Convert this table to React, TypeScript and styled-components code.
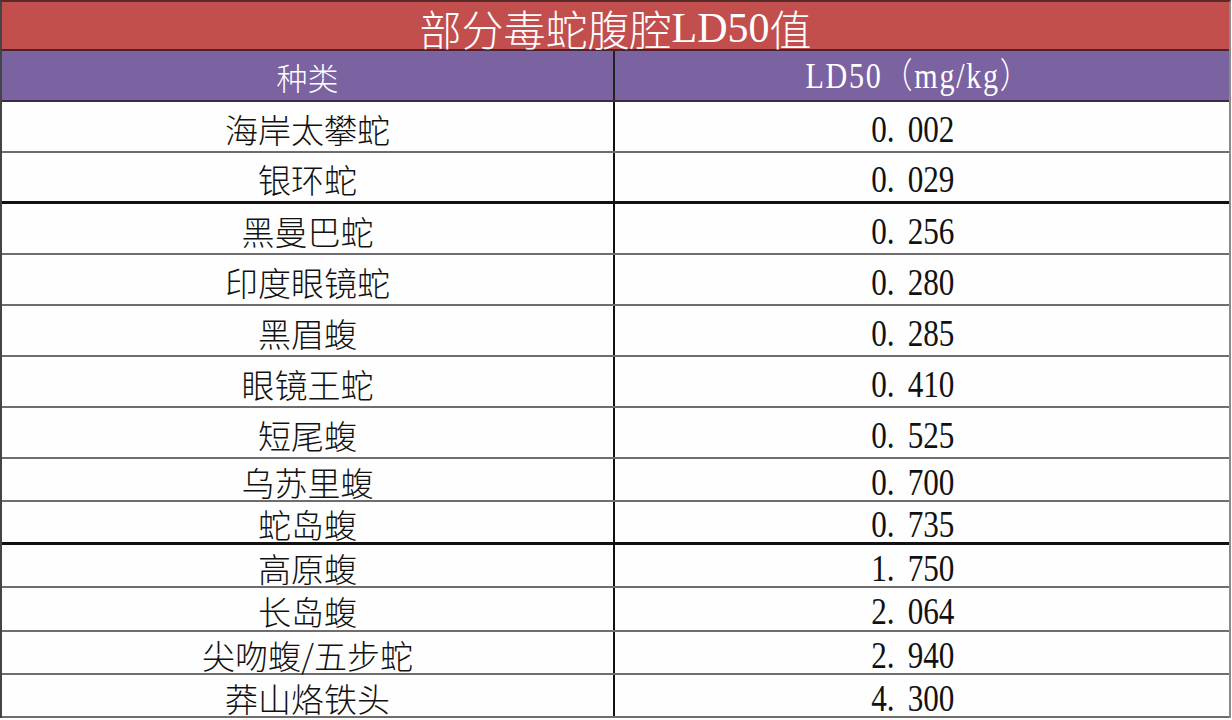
import React from "react";
import styled, { createGlobalStyle } from "styled-components";

const GlobalStyle = createGlobalStyle`
  html, body {
    margin: 0;
    padding: 0;
    background: #fdfdfd;
  }
  body {
    font-family: "Noto Sans CJK SC", "Liberation Sans", sans-serif;
  }
`;

type RowType = {
  h: number;
  line: "gray" | "black";
};

const rows: { name: string; value: string; h: number; line: "gray" | "black" }[] = [
  { name: "海岸太攀蛇", value: "0.002", h: 51, line: "gray" },
  { name: "银环蛇", value: "0.029", h: 51, line: "black" },
  { name: "黑曼巴蛇", value: "0.256", h: 51, line: "gray" },
  { name: "印度眼镜蛇", value: "0.280", h: 51, line: "gray" },
  { name: "黑眉蝮", value: "0.285", h: 51, line: "gray" },
  { name: "眼镜王蛇", value: "0.410", h: 51, line: "gray" },
  { name: "短尾蝮", value: "0.525", h: 51, line: "gray" },
  { name: "乌苏里蝮", value: "0.700", h: 43, line: "gray" },
  { name: "蛇岛蝮", value: "0.735", h: 43, line: "black" },
  { name: "高原蝮", value: "1.750", h: 43, line: "gray" },
  { name: "长岛蝮", value: "2.064", h: 44, line: "gray" },
  { name: "尖吻蝮/五步蛇", value: "2.940", h: 43, line: "gray" },
  { name: "莽山烙铁头", value: "4.300", h: 43, line: "gray" },
];

const Table = styled.div`
  width: 1231px;
  box-sizing: border-box;
  border-left: 2px solid #444;
  border-right: 2px solid #8a8a8a;
  border-top: 2px solid #5a2a2a;
  background: #fefefe;
`;

const TitleBar = styled.div`
  height: 49px;
  box-sizing: border-box;
  background: #c24e4d;
  border-bottom: 2px solid #4a2230;
  color: #fff;
  font-size: 42px;
  font-weight: 300;
  line-height: 40px;
  display: flex;
  align-items: center;
  justify-content: center;
  padding-top: 5px;
`;

const Latin = styled.span`
  font-family: "Liberation Serif", serif;
  font-weight: 400;
`;

const HeadRow = styled.div`
  display: grid;
  grid-template-columns: 613px 1fr;
  height: 51px;
  box-sizing: border-box;
  background: #7b62a0;
  border-bottom: 2px solid #3a2a48;
  color: #fff;
`;

const HeadCell = styled.div<{ first?: boolean }>`
  display: flex;
  align-items: center;
  justify-content: center;
  font-size: 31px;
  font-weight: 300;
  line-height: 1.2;
  padding-top: 2px;
  border-right: ${(p) => (p.first ? "2px solid #222" : "none")};
`;

const HeadUnit = styled.span`
  display: inline-block;
  font-family: "Liberation Serif", "Noto Sans CJK SC", serif;
  font-size: 35px;
  letter-spacing: 2px;
  transform: scaleX(0.86);
  margin-right: 6px;
`;

const Row = styled.div<RowType>`
  display: grid;
  grid-template-columns: 613px 1fr;
  height: ${(p) => p.h}px;
  box-sizing: border-box;
  border-bottom: ${(p) => (p.line === "black" ? "3px solid #111" : "2px solid #6e6e6e")};
`;

const Cell = styled.div<{ first?: boolean }>`
  display: flex;
  align-items: center;
  justify-content: center;
  padding-top: 4px;
  color: #111;
  font-size: 33px;
  font-weight: 300;
  line-height: 36px;
  border-right: ${(p) => (p.first ? "2px solid #111" : "none")};
`;

const Num = styled.span`
  display: inline-block;
  font-family: "Liberation Serif", serif;
  font-weight: 400;
  font-size: 38px;
  transform: scaleX(0.82);
  margin-right: 18px;
`;

const Dot = styled.span`
  margin-right: 16px;
`;

const Value = ({ v }: { v: string }) => {
  const [a, b] = v.split(".");
  return (
    <Num>
      {a}
      <Dot>.</Dot>
      {b}
    </Num>
  );
};

const App = () => {
  return (
    <>
      <GlobalStyle />
      <Table>
        <TitleBar>
          部分毒蛇腹腔<Latin>LD50</Latin>值
        </TitleBar>
        <HeadRow>
          <HeadCell first>种类</HeadCell>
          <HeadCell>
            <HeadUnit>LD50（mg/kg）</HeadUnit>
          </HeadCell>
        </HeadRow>
        {rows.map((r) => (
          <Row key={r.name} h={r.h} line={r.line}>
            <Cell first>{r.name}</Cell>
            <Cell>
              <Value v={r.value} />
            </Cell>
          </Row>
        ))}
      </Table>
    </>
  );
};

export default App;
